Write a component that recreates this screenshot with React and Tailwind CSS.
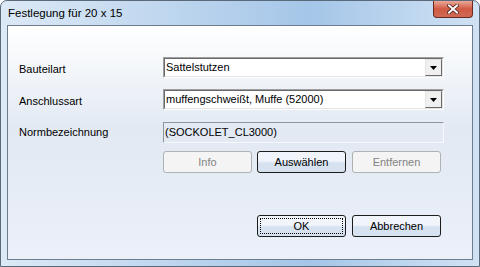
const font = { fontFamily: '"Liberation Sans", Arial, sans-serif' };

function Combo({ value }) {
  return (
    <div className="flex h-[21px] w-[281px] border-t border-l border-t-[#a0a0a0] border-l-[#a0a0a0] border-r border-b border-r-[#ffffff] border-b-[#ffffff]">
      <div className="flex flex-1 border-t border-l border-t-[#696969] border-l-[#696969] border-r border-b border-r-[#e3e3e3] border-b-[#e3e3e3] bg-white">
        <div className="flex-1 pl-[1px] text-[11px] leading-[17px] text-black">{value}</div>
        <div className="flex h-[17px] w-[17px] items-center justify-center border-t border-l border-t-[#e3e3e3] border-l-[#e3e3e3] border-r border-b border-r-[#696969] border-b-[#696969] bg-[#f0f0f0]">
          <svg width="7" height="4" viewBox="0 0 7 4">
            <path d="M0 0h7L3.5 4z" fill="#000" />
          </svg>
        </div>
      </div>
    </div>
  );
}

function Button({ children, disabled, focus }) {
  if (disabled) {
    return (
      <div className="flex h-[22px] w-[89px] items-center justify-center rounded-[3px] border border-[#adb2b5] bg-[#f4f4f4] text-[11px] text-[#838383]">
        {children}
      </div>
    );
  }
  return (
    <div className="flex h-[22px] w-[89px] items-center justify-center rounded-[3px] border border-[#1c1c1c] bg-gradient-to-b from-[#f1f5fb] from-45% to-[#d6e2ef] to-55% p-[2px] text-[11px] text-black">
      <div className={"flex h-full w-full items-center justify-center " + (focus ? "border border-dotted border-black" : "")}>
        {children}
      </div>
    </div>
  );
}

export default function App() {
  return (
    <div className="h-[267px] w-[480px] overflow-hidden bg-white" style={font}>
      <div className="flex h-full flex-col rounded-t-[7px] border border-[#5b6a7a] bg-gradient-to-r from-[#dce9f6] via-[#a5c6e8] via-65% to-[#d0e2f4]">
        <div className="flex h-[24px] items-start">
          <div className="pl-[7px] pt-[5px] text-[11.5px] leading-[14px] text-black">Festlegung für 20 x 15</div>
          <div className="ml-auto mr-[6px] flex h-[17px] w-[40px] items-center justify-center rounded-b-[4px] border border-t-0 border-[#6b2a20] bg-gradient-to-b from-[#e9a898] via-[#d05a43] via-50% to-[#cf6a55]">
            <svg width="12" height="10" viewBox="0 0 12 10">
              <path d="M2 1.5l8 7M10 1.5l-8 7" stroke="#4a2018" strokeWidth="3.6" strokeLinecap="square" />
              <path d="M2 1.5l8 7M10 1.5l-8 7" stroke="#ffffff" strokeWidth="2" strokeLinecap="square" />
            </svg>
          </div>
        </div>
        <div className="mx-[6px] mb-[6px] flex flex-1 flex-col border border-[#6e7d8d] bg-gradient-to-b from-white via-[#e2e9f3] via-45% to-[#ebf0f9] pl-[11px] pt-[31px]">
          <div className="flex items-center">
            <div className="w-[144px] pt-[3px] text-[11px] text-black">Bauteilart</div>
            <Combo value="Sattelstutzen" />
          </div>
          <div className="mt-[11px] flex items-center">
            <div className="w-[144px] pt-[3px] text-[11px] text-black">Anschlussart</div>
            <Combo value="muffengschweißt, Muffe (52000)" />
          </div>
          <div className="mt-[12px] flex items-center">
            <div className="w-[144px] text-[11px] text-black">Normbezeichnung</div>
            <div className="h-[21px] w-[281px] border-t border-l border-[#8f969e] border-r border-b border-r-[#f5f8fc] border-b-[#f5f8fc] pl-[1px] text-[11px] leading-[19px] text-black">
              (SOCKOLET_CL3000)
            </div>
          </div>
          <div className="mt-[8px] flex pl-[144px]">
            <Button disabled>Info</Button>
            <div className="ml-[5px]">
              <Button>Auswählen</Button>
            </div>
            <div className="ml-[6px]">
              <Button disabled>Entfernen</Button>
            </div>
          </div>
          <div className="mt-[42px] flex pl-[238px]">
            <Button focus>OK</Button>
            <div className="ml-[6px]">
              <Button>Abbrechen</Button>
            </div>
          </div>
        </div>
      </div>
    </div>
  );
}
